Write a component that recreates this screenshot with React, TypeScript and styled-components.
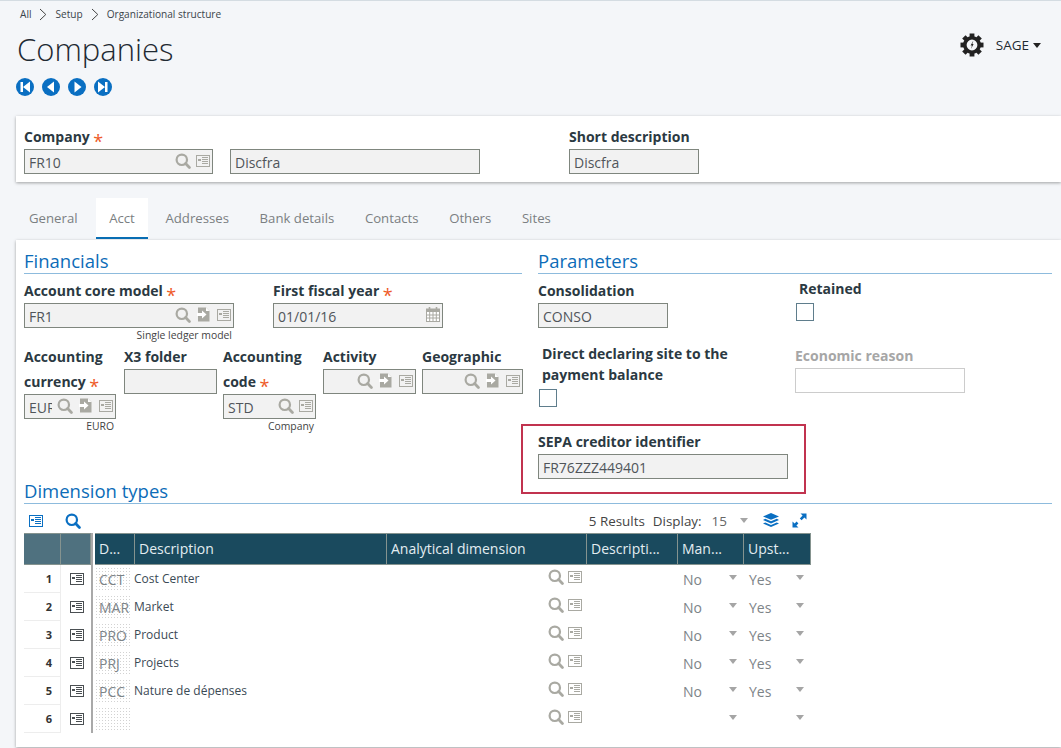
import React from "react";
import styled, { createGlobalStyle } from "styled-components";

const GlobalStyle = createGlobalStyle`
  html, body {
    margin: 0;
    padding: 0;
    background: #f4f6f9;
    font-family: "Open Sans", "Liberation Sans", sans-serif;
    color: #2b3942;
  }
  * { box-sizing: border-box; }
`;

const SearchIcon = ({ color = "#a9a9a2" }: { color?: string }) => (
  <svg width="16" height="16" viewBox="0 0 16 16" fill="none">
    <circle cx="6.8" cy="6.8" r="5.2" stroke={color} strokeWidth="2.2" />
    <path d="M10.6 10.6 L14.4 14.4" stroke={color} strokeWidth="2.8" strokeLinecap="round" />
  </svg>
);

const CardIcon = ({ color = "#a9a9a2" }: { color?: string }) => (
  <svg width="14" height="12" viewBox="0 0 14 12" fill="none">
    <rect x="0.5" y="0.5" width="13" height="11" stroke={color} />
    <path d="M6 2.5 H12 M6 4.5 H12 M6 6.5 H12 M6 8.5 H12" stroke={color} />
    <rect x="2" y="4" width="3" height="2" fill={color} />
  </svg>
);

const LinkSlot = styled.span`
  display: flex;
  margin: 0 2px 0 1px;
`;

const LinkIcon = () => (
  <LinkSlot>
    <svg width="13" height="15" viewBox="0 0 13 15">
      <path d="M1 0.5 H9 L12.5 4 V14.5 H1 Z" fill="#a9a9a2" />
      <path d="M0 6 H5 V3.5 L9.5 7.5 L5 11.5 V9 H0 Z" fill="#fff" />
      <path d="M9 0.5 V4 H12.5" fill="#fff" />
    </svg>
  </LinkSlot>
);

const CalendarIcon = () => (
  <svg width="14" height="15" viewBox="0 0 14 15" fill="none">
    <rect x="0.5" y="2" width="13" height="12.5" fill="#fff" stroke="#a9a9a2" />
    <rect x="0.5" y="2" width="13" height="3" fill="#a9a9a2" />
    <path d="M3.5 0 V3.5 M10.5 0 V3.5" stroke="#a9a9a2" strokeWidth="1.6" />
    <path d="M0.5 8 H13.5 M0.5 11 H13.5 M3.7 5 V14.5 M7 5 V14.5 M10.3 5 V14.5" stroke="#a9a9a2" />
  </svg>
);

const NavIcon = ({ kind }: { kind: "first" | "prev" | "next" | "last" }) => {
  const glyphs = {
    first: "M4.5 4 H7 V14 H4.5 Z M14 3.5 V14.5 L7 9 Z",
    prev: "M12 3.5 V14.5 L5 9 Z",
    next: "M6.5 3.5 V14.5 L13.5 9 Z",
    last: "M11 4 H13.5 V14 H11 Z M4 3.5 V14.5 L11 9 Z",
  };
  return (
    <svg width="18" height="18" viewBox="0 0 18 18">
      <circle cx="9" cy="9" r="9" fill="#0a6fc2" />
      <path d={glyphs[kind]} fill="#fff" />
    </svg>
  );
};

const GearIcon = () => (
  <svg width="24" height="24" viewBox="0 0 24 24">
    {[0, 45, 90, 135, 180, 225, 270, 315].map((deg) => (
      <rect key={deg} x="9.6" y="0.5" width="4.8" height="5" fill="#222" transform={`rotate(${deg} 12 12)`} />
    ))}
    <circle cx="12" cy="12" r="7.2" fill="none" stroke="#222" strokeWidth="3.6" />
    <path d="M13.4 7.5 L10.6 12.5 H12 L11 16 L13.6 11 H12.3 Z" fill="#222" />
  </svg>
);

const LayersIcon = () => (
  <svg width="16" height="15" viewBox="0 0 16 15">
    <path d="M8 0 L16 3.4 L8 6.8 L0 3.4 Z" fill="#0a6fc2" />
    <path d="M2.2 5.8 L8 8.3 L13.8 5.8 L16 7 L8 10.4 L0 7 Z" fill="#0a6fc2" />
    <path d="M2.2 9.4 L8 11.9 L13.8 9.4 L16 10.6 L8 14 L0 10.6 Z" fill="#0a6fc2" />
  </svg>
);

const ExpandIcon = () => (
  <svg width="15" height="15" viewBox="0 0 15 15">
    <path d="M8.5 0.5 H14.5 V6.5 L12.4 4.4 L9.6 7.2 L7.8 5.4 L10.6 2.6 Z" fill="#0a6fc2" />
    <path d="M0.5 8.5 L2.6 10.6 L4.6 8.6 L6.4 10.4 L4.4 12.4 L6.5 14.5 H0.5 Z" fill="#0a6fc2" />
  </svg>
);

const Chevron = () => (
  <svg width="8" height="13" viewBox="0 0 8 13" fill="none">
    <path d="M1 1 L6.8 6.5 L1 12" stroke="#444" strokeWidth="1" />
  </svg>
);

const Page = styled.div`
  width: 1061px;
  height: 748px;
  overflow: hidden;
  border-top: 1px solid #d4dce2;
  display: flex;
  flex-direction: column;
`;

const Breadcrumb = styled.nav`
  height: 26px;
  padding-left: 20px;
  display: flex;
  align-items: center;
  gap: 8px;
  font-size: 10.1px;
  color: #3a444b;
`;

const Header = styled.header`
  display: flex;
  justify-content: space-between;
  align-items: flex-start;
  padding: 0 20px 0 16px;
`;

const Title = styled.h1`
  margin: 0 0 0 1px;
  font-size: 31px;
  line-height: 44px;
  font-weight: 300;
  color: #1f2a33;
`;

const NavButtons = styled.div`
  display: flex;
  gap: 8px;
  margin-top: 7px;
  height: 18px;
`;

const UserMenu = styled.div`
  display: flex;
  align-items: center;
  gap: 4px;
  margin-top: 6px;
  font-size: 13.5px;
  color: #1f2a33;
  svg { margin-right: 8px; }
`;

const UserCaret = styled.span`
  width: 0;
  height: 0;
  border-left: 4.5px solid transparent;
  border-right: 4.5px solid transparent;
  border-top: 5px solid #222;
`;

const TopCard = styled.section`
  margin: 20px 0 0 16px;
  height: 66px;
  padding: 9px 8px 8px;
  background: #fff;
  box-shadow: 0 1px 3px rgba(0, 0, 0, 0.35);
  display: flex;
`;

const Tabs = styled.div`
  display: flex;
  gap: 4.6px;
  margin-top: 16px;
  padding-left: 16px;
  height: 41px;
`;

const Tab = styled.div<{ $active?: boolean }>`
  padding: 0 13px;
  margin-left: ${(p) => (p.$active ? 1 : 0)}px;
  display: flex;
  align-items: center;
  font-size: 13.2px;
  background: ${(p) => (p.$active ? "#fff" : "transparent")};
  border-bottom: 2px solid ${(p) => (p.$active ? "#0a6fb5" : "transparent")};
  color: #7b7f82;
`;

const MainCard = styled.section`
  margin: 1px 0 0 16px;
  height: 507px;
  padding: 9px 9px 0 8px;
  background: #fff;
  box-shadow: 0 1px 3px rgba(0, 0, 0, 0.35);
`;

const Columns = styled.div`
  display: grid;
  grid-template-columns: 498px 514px;
  column-gap: 16px;
  height: 230px;
`;

const SectionTitle = styled.h2`
  margin: 0;
  height: 25px;
  font-size: 18.5px;
  line-height: 24px;
  font-weight: 400;
  color: #0c6cb8;
  border-bottom: 1px solid #8dbbdd;
`;

const FieldRow = styled.div`
  display: flex;
  gap: 39px;
  margin-top: 4px;
`;

const Field = styled.div<{ $width: number; $left?: number }>`
  width: ${(p) => p.$width}px;
  margin-left: ${(p) => p.$left ?? 0}px;
  flex: none;
`;

const Label = styled.div<{ $muted?: boolean }>`
  font-size: 14px;
  line-height: 25px;
  font-weight: 700;
  color: ${(p) => (p.$muted ? "#a6a6a6" : "#2b3942")};
  white-space: nowrap;
`;

const TightLabel = styled(Label)`
  margin-top: -1px;
  line-height: 21px;
  white-space: normal;
`;

const Star = styled.span`
  display: inline-block;
  margin-left: 3.5px;
  font-size: 18px;
  line-height: 0;
  font-weight: 400;
  vertical-align: -6px;
  color: #ee5a28;
`;

const Input = styled.div<{ $plain?: boolean }>`
  height: 25px;
  padding: 1px 2px 0 4px;
  display: flex;
  align-items: center;
  gap: 5px;
  background: ${(p) => (p.$plain ? "#fff" : "#f2f2f2")};
  border: 1px solid ${(p) => (p.$plain ? "#cccccc" : "#7f867e")};
  font-size: 14px;
  color: #50555a;
  svg { margin-top: -3px; }
`;

const InputText = styled.span`
  flex: 1;
  min-width: 0;
  overflow: hidden;
  white-space: nowrap;
`;

const Caption = styled.div`
  height: 16px;
  padding-right: 2px;
  text-align: right;
  font-size: 10.4px;
  line-height: 14px;
  color: #444;
  white-space: nowrap;
`;

const FolderGrid = styled.div`
  display: grid;
  grid-template-columns: 100px 99px 100px 99px 101px;
  align-items: start;
`;

const BottomField = styled.div<{ $width: number }>`
  width: ${(p) => p.$width}px;
  display: flex;
  flex-direction: column;
`;

const ParamRow = styled.div`
  display: flex;
  margin-top: 4px;
  height: 66px;
`;

const ParamRowLower = styled.div`
  display: flex;
  height: 80px;
`;

const Checkbox = styled.div`
  width: 18px;
  height: 18px;
  background: #fff;
  border: 1px solid #5f7d8c;
`;

const RetainedLabel = styled(Label)`
  margin: -2px 0 2px 3px;
`;

const DirectField = styled.div`
  width: 257px;
  padding-left: 4px;
  flex: none;
`;

const DirectBox = styled(Checkbox)`
  margin: 4px 0 0 -3px;
`;

const SepaBox = styled.div`
  width: 285px;
  height: 70px;
  margin: 0 0 0 -17px;
  padding: 4px 16px 0 15px;
  border: 2px solid #c1334f;
`;

const FieldLabelLine = styled(Label)`
  line-height: 24px;
`;

const GridSection = styled.div``;

const Toolbar = styled.div`
  width: 787px;
  height: 29px;
  display: flex;
  align-items: center;
  padding: 4px 4px 0 5px;
  font-size: 13.4px;
  color: #444;
`;

const ToolbarLeft = styled.div`
  display: flex;
  align-items: center;
  gap: 22px;
  margin-right: auto;
`;

const ToolbarRight = styled.div`
  display: flex;
  align-items: center;
`;

const ResultCount = styled.span`
  margin-right: 8px;
`;

const DisplayLabel = styled.span`
  margin-right: 10px;
`;

const DisplayValue = styled.span`
  margin-right: 13px;
  font-size: 13.5px;
  color: #666;
`;

const ToolbarCaret = styled.span`
  width: 0;
  height: 0;
  margin-right: 15px;
  border-left: 4.5px solid transparent;
  border-right: 4.5px solid transparent;
  border-top: 5px solid #a5a5a5;
`;

const ToolbarSpacer = styled.span`
  width: 13px;
`;

const Table = styled.div`
  width: 787px;
  display: grid;
  grid-template-columns: 37px 30px 4px 40px 252px 200px 91px 66px 67px;
  grid-auto-rows: 28px;
  grid-template-rows: 32px;
`;

const HeadCell = styled.div<{ $frozen?: boolean }>`
  padding: 0 0 2px 4px;
  display: flex;
  align-items: center;
  background: ${(p) => (p.$frozen ? "#4f717f" : "#1a4a5e")};
  color: #e3edf1;
  font-size: 14px;
  border-right: 1px solid #85938f;
  border-bottom: 1px solid #85938f;
  border-top: 1px solid #85938f;
  white-space: nowrap;
`;

const Divider = styled.div`
  border-left: 2px solid #a9a9a9;
`;

const NumberCell = styled.div`
  padding-right: 8px;
  display: flex;
  align-items: center;
  justify-content: flex-end;
  font-size: 11px;
  font-weight: 700;
  color: #333;
  border-right: 1px solid #ededed;
  border-bottom: 1px solid #ededed;
`;

const IconCell = styled.div`
  display: flex;
  align-items: center;
  padding-left: 9px;
`;

const CodeCell = styled.div`
  display: flex;
  align-items: center;
`;

const CodeValue = styled.span`
  width: 37px;
  height: 24px;
  padding-left: 4px;
  font-size: 14px;
  line-height: 26px;
  color: #7d8488;
  white-space: nowrap;
  background-image: radial-gradient(#d2d2d2 0.6px, transparent 0.7px);
  background-size: 3px 3px;
`;

const TextCell = styled.div`
  margin-left: -1px;
  padding-bottom: 2px;
  display: flex;
  align-items: center;
  font-size: 12px;
  color: #3b4a55;
`;

const LookupCell = styled.div`
  padding: 0 5px 4px 0;
  display: flex;
  align-items: center;
  justify-content: flex-end;
  gap: 4px;
`;

const EmptyCell = styled.div``;

const SelectCell = styled.div`
  padding: 0 7px 0 5px;
  display: flex;
  align-items: center;
  justify-content: space-between;
  font-size: 14px;
  color: #7d8488;
`;

const SelectValue = styled.span`
  padding-top: 1px;
`;

const SelectCaret = styled.span`
  margin-bottom: 4px;
  width: 0;
  height: 0;
  border-left: 4.5px solid transparent;
  border-right: 4.5px solid transparent;
  border-top: 5px solid #a5a5a5;
`;

const rows = [
  { code: "CCT", text: "Cost Center", man: "No", up: "Yes" },
  { code: "MAR", text: "Market", man: "No", up: "Yes" },
  { code: "PRO", text: "Product", man: "No", up: "Yes" },
  { code: "PRJ", text: "Projects", man: "No", up: "Yes" },
  { code: "PCC", text: "Nature de dépenses", man: "No", up: "Yes" },
  { code: "", text: "", man: "", up: "" },
];

const heads = ["D...", "Description", "Analytical dimension", "Descripti...", "Man...", "Upst..."];

export default function App() {
  return (
    <>
      <GlobalStyle />
      <Page>
        <Breadcrumb>
          <span>All</span>
          <Chevron />
          <span>Setup</span>
          <Chevron />
          <span>Organizational structure</span>
        </Breadcrumb>

        <Header>
          <div>
            <Title>Companies</Title>
            <NavButtons>
              <NavIcon kind="first" />
              <NavIcon kind="prev" />
              <NavIcon kind="next" />
              <NavIcon kind="last" />
            </NavButtons>
          </div>
          <UserMenu>
            <GearIcon />
            SAGE
            <UserCaret />
          </UserMenu>
        </Header>

        <TopCard>
          <Field $width={189}>
            <FieldLabelLine>
              Company<Star>*</Star>
            </FieldLabelLine>
            <Input>
              <InputText>FR10</InputText>
              <SearchIcon />
              <CardIcon />
            </Input>
          </Field>
          <Field $width={250} $left={17}>
            <FieldLabelLine>&nbsp;</FieldLabelLine>
            <Input>
              <InputText>Discfra</InputText>
            </Input>
          </Field>
          <Field $width={130} $left={89}>
            <FieldLabelLine>Short description</FieldLabelLine>
            <Input>
              <InputText>Discfra</InputText>
            </Input>
          </Field>
        </TopCard>

        <Tabs>
          <Tab>General</Tab>
          <Tab $active>Acct</Tab>
          <Tab>Addresses</Tab>
          <Tab>Bank details</Tab>
          <Tab>Contacts</Tab>
          <Tab>Others</Tab>
          <Tab>Sites</Tab>
        </Tabs>

        <MainCard>
          <Columns>
            <div>
              <SectionTitle>Financials</SectionTitle>
              <FieldRow>
                <Field $width={210}>
                  <Label>
                    Account core model<Star>*</Star>
                  </Label>
                  <Input>
                    <InputText>FR1</InputText>
                    <SearchIcon />
                    <LinkIcon />
                    <CardIcon />
                  </Input>
                  <Caption>Single ledger model</Caption>
                </Field>
                <Field $width={170}>
                  <Label>
                    First fiscal year<Star>*</Star>
                  </Label>
                  <Input>
                    <InputText>01/01/16</InputText>
                    <CalendarIcon />
                  </Input>
                </Field>
              </FieldRow>
              <FolderGrid>
                <BottomField $width={92}>
                  <Label>
                    Accounting
                    <br />
                    currency<Star>*</Star>
                  </Label>
                  <Input>
                    <InputText>EUR</InputText>
                    <SearchIcon />
                    <LinkIcon />
                    <CardIcon />
                  </Input>
                  <Caption>EURO</Caption>
                </BottomField>
                <BottomField $width={93}>
                  <Label>X3 folder</Label>
                  <Input />
                </BottomField>
                <BottomField $width={93}>
                  <Label>
                    Accounting
                    <br />
                    code<Star>*</Star>
                  </Label>
                  <Input>
                    <InputText>STD</InputText>
                    <SearchIcon />
                    <CardIcon />
                  </Input>
                  <Caption>Company</Caption>
                </BottomField>
                <BottomField $width={93}>
                  <Label>Activity</Label>
                  <Input>
                    <InputText />
                    <SearchIcon />
                    <LinkIcon />
                    <CardIcon />
                  </Input>
                </BottomField>
                <BottomField $width={101}>
                  <Label>Geographic</Label>
                  <Input>
                    <InputText />
                    <SearchIcon />
                    <LinkIcon />
                    <CardIcon />
                  </Input>
                </BottomField>
              </FolderGrid>
            </div>

            <div>
              <SectionTitle>Parameters</SectionTitle>
              <ParamRow>
                <Field $width={130}>
                  <Label>Consolidation</Label>
                  <Input>
                    <InputText>CONSO</InputText>
                  </Input>
                </Field>
                <Field $width={120} $left={128}>
                  <RetainedLabel>Retained</RetainedLabel>
                  <Checkbox />
                </Field>
              </ParamRow>
              <ParamRowLower>
                <DirectField>
                  <TightLabel>
                    Direct declaring site to the
                    <br />
                    payment balance
                  </TightLabel>
                  <DirectBox />
                </DirectField>
                <Field $width={170}>
                  <FieldLabelLine $muted>Economic reason</FieldLabelLine>
                  <Input $plain />
                </Field>
              </ParamRowLower>
              <SepaBox>
                <FieldLabelLine>SEPA creditor identifier</FieldLabelLine>
                <Input>
                  <InputText>FR76ZZZ449401</InputText>
                </Input>
              </SepaBox>
            </div>
          </Columns>

          <GridSection>
            <SectionTitle>Dimension types</SectionTitle>
            <Toolbar>
              <ToolbarLeft>
                <CardIcon color="#0a6fc2" />
                <SearchIcon color="#0a6fc2" />
              </ToolbarLeft>
              <ToolbarRight>
                <ResultCount>5 Results</ResultCount>
                <DisplayLabel>Display:</DisplayLabel>
                <DisplayValue>15</DisplayValue>
                <ToolbarCaret />
                <LayersIcon />
                <ToolbarSpacer />
                <ExpandIcon />
              </ToolbarRight>
            </Toolbar>
            <Table>
              <HeadCell $frozen />
              <HeadCell $frozen />
              <Divider />
              {heads.map((h) => (
                <HeadCell key={h}>{h}</HeadCell>
              ))}
              {rows.map((r, i) => (
                <React.Fragment key={i}>
                  <NumberCell>{i + 1}</NumberCell>
                  <IconCell>
                    <CardIcon color="#4a4f52" />
                  </IconCell>
                  <Divider />
                  <CodeCell>
                    <CodeValue>{r.code}</CodeValue>
                  </CodeCell>
                  <TextCell>{r.text}</TextCell>
                  <LookupCell>
                    <SearchIcon />
                    <CardIcon />
                  </LookupCell>
                  <EmptyCell />
                  <SelectCell>
                    <SelectValue>{r.man}</SelectValue>
                    <SelectCaret />
                  </SelectCell>
                  <SelectCell>
                    <SelectValue>{r.up}</SelectValue>
                    <SelectCaret />
                  </SelectCell>
                </React.Fragment>
              ))}
            </Table>
          </GridSection>
        </MainCard>
      </Page>
    </>
  );
}
